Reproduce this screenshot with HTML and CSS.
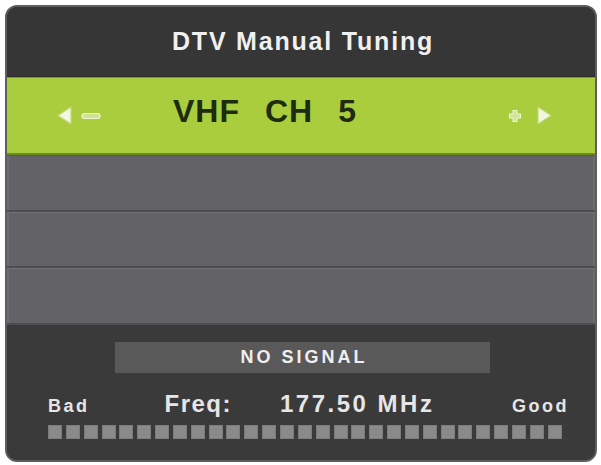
FILE: index.html
```html
<!DOCTYPE html>
<html lang="en">
<head>
<meta charset="utf-8">
<title>DTV Manual Tuning</title>
<link rel="stylesheet" href="styles.css">
</head>
<body>
<div class="panel">
  <div class="header"><span class="title">DTV Manual Tuning</span></div>
  <div class="tuner">
    <svg class="tri" width="15" height="19" viewBox="0 0 15 19"><path d="M14 1 L1 9.5 L14 18 Z" fill="#f3f7e2" stroke="#c3d880" stroke-width="1.2" stroke-linejoin="round"/></svg>
    <svg class="minus" width="20" height="8" viewBox="0 0 20 8"><rect x="1" y="1.5" width="18" height="5" rx="2.5" fill="#d0e294" stroke="#eef5d2" stroke-width="1.2"/></svg>
    <div class="channel"><span>VHF</span><span>CH</span><span>5</span></div>
    <div class="spacer"></div>
    <svg class="plus" width="14" height="14" viewBox="0 0 14 14"><path d="M5 1.5 H9 V5 H12.5 V9 H9 V12.5 H5 V9 H1.5 V5 H5 Z" fill="#d0e294" stroke="#eef5d2" stroke-width="1.1" stroke-linejoin="round"/></svg>
    <svg class="tri right" width="15" height="19" viewBox="0 0 15 19"><path d="M1 1 L14 9.5 L1 18 Z" fill="#f3f7e2" stroke="#c3d880" stroke-width="1.2" stroke-linejoin="round"/></svg>
  </div>
  <div class="row r1"></div>
  <div class="row r2"></div>
  <div class="row r3"></div>
  <div class="footer">
    <div class="status">NO SIGNAL</div>
    <div class="info">
      <span class="bad">Bad</span>
      <span class="freq-label">Freq:</span>
      <span class="freq">177.50 MHz</span>
      <span class="good">Good</span>
    </div>
    <div class="meter">
      <i></i><i></i><i></i><i></i><i></i><i></i><i></i><i></i><i></i><i></i>
      <i></i><i></i><i></i><i></i><i></i><i></i><i></i><i></i><i></i><i></i>
      <i></i><i></i><i></i><i></i><i></i><i></i><i></i><i></i><i></i>
    </div>
  </div>
</div>
</body>
</html>
```

FILE: styles.css
```css
html, body {
  margin: 0;
  padding: 0;
  background: #ffffff;
}

.panel {
  box-sizing: border-box;
  width: 592px;
  height: 457px;
  margin: 5px 0 0 5px;
  border: 2px solid #5e5e60;
  border-radius: 12px;
  overflow: hidden;
  display: flex;
  flex-direction: column;
  background: #3a3a3b;
  font-family: "Liberation Sans", Arial, sans-serif;
  font-weight: bold;
}

.header {
  height: 69px;
  flex: none;
  display: flex;
  align-items: center;
  justify-content: center;
  background: #363637;
  border-bottom: 1px solid #2a2a2a;
}

.title {
  color: #f0f0f0;
  font-size: 25px;
  letter-spacing: 1.8px;
  padding-left: 4px;
}

.tuner {
  height: 78px;
  flex: none;
  box-sizing: border-box;
  display: flex;
  align-items: center;
  padding: 0 43px 0 50px;
  background: #a9cd3d;
  border-top: 1px solid #7e9a2a;
  border-bottom: 2px solid #6f8a22;
}

.tri { display: block; }
.minus { display: block; margin-left: 9px; }
.plus { display: block; }
.tri.right { margin-left: 15px; }

.channel {
  margin-left: 72px;
  margin-bottom: 9px;
  display: flex;
  gap: 25px;
  color: #1f2b0e;
  font-size: 32px;
  letter-spacing: 1px;
}

.spacer { flex: 1; }

.row {
  flex: none;
  box-sizing: border-box;
  background: #626267;
  border-top: 1px solid #717176;
  border-bottom: 2px solid #4c4c51;
  box-shadow: inset 2px 0 0 #6b6b70, inset -2px 0 0 #6b6b70;
}
.r1 { height: 57px; border-top-color: #55555a; }
.r2 { height: 56px; }
.r3 { height: 57px; }

.footer {
  flex: 1;
  display: flex;
  flex-direction: column;
  padding-top: 17px;
  background: #3a3a3b;
}

.status {
  width: 375px;
  height: 31px;
  margin-left: 108px;
  display: flex;
  align-items: center;
  justify-content: center;
  background: #595959;
  color: #efefef;
  font-size: 18px;
  letter-spacing: 3px;
  padding-left: 3px;
  box-sizing: border-box;
}

.info {
  margin-top: 17px;
  display: flex;
  align-items: baseline;
  padding: 0 26px 0 41px;
  color: #e6e6e6;
}

.bad {
  font-size: 18px;
  letter-spacing: 2.5px;
}

.freq-label {
  margin-left: 75px;
  font-size: 24px;
  letter-spacing: 1.5px;
}

.freq {
  margin-left: 48px;
  font-size: 24px;
  letter-spacing: 2.5px;
}

.good {
  margin-left: auto;
  font-size: 18px;
  letter-spacing: 2.5px;
}

.meter {
  width: 514px;
  margin: 7px 0 0 41px;
  display: flex;
  justify-content: space-between;
}

.meter i {
  display: block;
  width: 14px;
  height: 14px;
  background: #8a8a8b;
  box-shadow: inset 0 0 0 1px #7c7c7d;
}
```
